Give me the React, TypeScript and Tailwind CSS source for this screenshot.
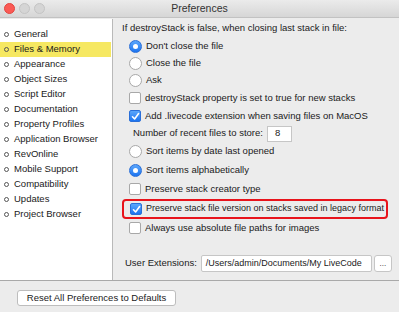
import React from "react";

const font = { fontFamily: '"Liberation Sans", Arial, sans-serif' };

function Radio({ on }: { on?: boolean }) {
  return on ? (
    <span className="w-[13px] h-[13px] rounded-full bg-gradient-to-b from-[#5aa6fb] to-[#1a74f0] border border-[#2a6fd8] flex items-center justify-center shrink-0">
      <span className="w-[5px] h-[5px] rounded-full bg-white" />
    </span>
  ) : (
    <span className="w-[13px] h-[13px] rounded-full bg-white border border-[#a8a8a8] shrink-0" />
  );
}

function Check({ on }: { on?: boolean }) {
  return on ? (
    <span className="w-[12px] h-[12px] rounded-[2px] bg-gradient-to-b from-[#5aa6fb] to-[#1a74f0] border border-[#2a6fd8] flex items-center justify-center shrink-0">
      <svg width="9" height="9" viewBox="0 0 9 9">
        <path d="M1.5 4.8 L3.6 7 L7.6 1.6" stroke="white" strokeWidth="1.6" fill="none" strokeLinecap="round" strokeLinejoin="round" />
      </svg>
    </span>
  ) : (
    <span className="w-[12px] h-[12px] rounded-[2px] bg-white border border-[#a8a8a8] shrink-0" />
  );
}

const items = [
  "General",
  "Files & Memory",
  "Appearance",
  "Object Sizes",
  "Script Editor",
  "Documentation",
  "Property Profiles",
  "Application Browser",
  "RevOnline",
  "Mobile Support",
  "Compatibility",
  "Updates",
  "Project Browser",
];

export default function App() {
  return (
    <div className="w-[399px] h-[312px] bg-[#ececec] flex flex-col text-[9.5px] text-[#1a1a1a] overflow-hidden whitespace-nowrap" style={font}>
      <div className="h-[18px] shrink-0 relative flex items-center justify-center bg-gradient-to-b from-[#ebebeb] to-[#d6d6d6] border-b border-[#c2c2c2]">
        <div className="absolute left-[4px] top-[3px] flex gap-[4px]">
          <span className="w-[11px] h-[11px] rounded-full bg-[#fb5a55] border border-[#e14640]" />
          <span className="w-[11px] h-[11px] rounded-full bg-[#d5d5d5] border border-[#c4c4c4]" />
          <span className="w-[11px] h-[11px] rounded-full bg-[#d5d5d5] border border-[#c4c4c4]" />
        </div>
        <span className="text-[#333] text-[10.5px]">Preferences</span>
      </div>
      <div className="flex h-[263px] shrink-0 border-b border-[#a9a9a9]">
        <div className="w-[113px] shrink-0 bg-white border-r border-[#b9b9b9] pt-[8px] mt-[1px]">
          {items.map((t, i) => (
            <div
              key={t}
              className={`h-[15px] flex items-center pl-[4px] ${i === 1 ? "bg-[#f6e862] mr-[1px]" : ""}`}
            >
              <span className="w-[5px] h-[5px] rounded-full border border-[#555] mr-[5px]" />
              <span>{t}</span>
            </div>
          ))}
        </div>
        <div className="flex-1 min-w-0 flex flex-col">
          <div className="h-[20px] flex items-center pl-[9px]">If destroyStack is false, when closing last stack in file:</div>
          <div className="h-[17px] flex items-center pl-[16px] gap-[4px]"><Radio on /><span>Don't close the file</span></div>
          <div className="h-[17px] flex items-center pl-[16px] gap-[4px]"><Radio /><span>Close the file</span></div>
          <div className="h-[17px] flex items-center pl-[16px] gap-[4px]"><Radio /><span>Ask</span></div>
          <div className="h-[18px] flex items-center pl-[16px] gap-[4px]"><Check /><span>destroyStack property is set to true for new stacks</span></div>
          <div className="h-[18px] flex items-center pl-[16px] gap-[4px]"><Check on /><span>Add .livecode extension when saving files on MacOS</span></div>
          <div className="h-[17px] flex items-center pl-[20px]">
            <span>Number of recent files to store:</span>
            <span className="ml-[4px] w-[25px] h-[16px] bg-white border border-[#c6c6c6] flex items-center pl-[7px]">8</span>
          </div>
          <div className="h-[19px] flex items-center pl-[16px] gap-[4px]"><Radio /><span>Sort items by date last opened</span></div>
          <div className="h-[18px] flex items-center pl-[16px] gap-[4px]"><Radio on /><span>Sort items alphabetically</span></div>
          <div className="h-[20px] flex items-center pl-[16px] gap-[4px]"><Check /><span>Preserve stack creator type</span></div>
          <div className="h-[20px] flex items-center ml-[9px] mr-[11px] pl-[6px] gap-[4px] border-2 border-[#e8141c] rounded-[4px]"><Check on /><span className="text-[9px]">Preserve stack file version on stacks saved in legacy format</span></div>
          <div className="h-[18px] flex items-center pl-[16px] gap-[4px]"><Check /><span>Always use absolute file paths for images</span></div>
          <div className="flex-1" />
          <div className="h-[17px] flex items-center pl-[12px] mb-[8px]">
            <span>User Extensions:</span>
            <span className="ml-[4px] w-[171px] h-[17px] bg-white border border-[#c6c6c6] rounded-[2px] flex items-center pl-[4px] overflow-hidden text-[9px]">/Users/admin/Documents/My LiveCode</span>
            <span className="ml-[2px] w-[18px] h-[17px] bg-white border border-[#c6c6c6] rounded-[3px] flex items-center justify-center text-[8px]">...</span>
          </div>
        </div>
      </div>
      <div className="flex-1 flex items-center pl-[17px]">
        <span className="w-[159px] h-[16px] bg-white border border-[#bdbdbd] rounded-[3px] flex items-center justify-center mt-[3px]">Reset All Preferences to Defaults</span>
      </div>
    </div>
  );
}
